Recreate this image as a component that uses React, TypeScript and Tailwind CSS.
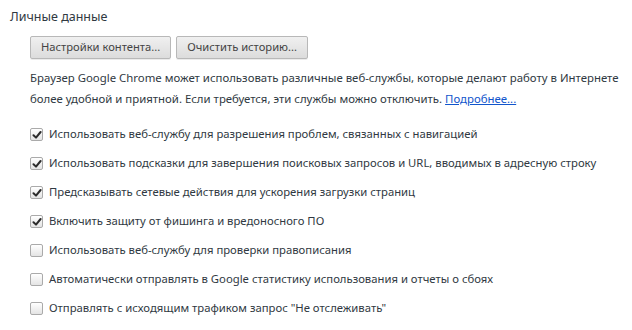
import { useState } from "react";

const options = [
  { label: "Использовать веб-службу для разрешения проблем, связанных с навигацией", checked: true },
  { label: "Использовать подсказки для завершения поисковых запросов и URL, вводимых в адресную строку", checked: true },
  { label: "Предсказывать сетевые действия для ускорения загрузки страниц", checked: true },
  { label: "Включить защиту от фишинга и вредоносного ПО", checked: true },
  { label: "Использовать веб-службу для проверки правописания", checked: false },
  { label: "Автоматически отправлять в Google статистику использования и отчеты о сбоях", checked: false },
  { label: "Отправлять с исходящим трафиком запрос \"Не отслеживать\"", checked: false }
];

function Checkbox({ checked, onChange }: { checked: boolean; onChange: () => void }) {
  return (
    <button
      type="button"
      onClick={onChange}
      className="flex h-[13px] w-[13px] shrink-0 items-center justify-center rounded-[2px] border border-[#aaaaaa] bg-gradient-to-b from-[#ffffff] to-[#e4e4e4]"
    >
      {checked ? (
        <svg className="h-[10px] w-[10px]" viewBox="0 0 10 10" fill="none">
          <path d="M1.5 5.2L4 7.6L8.6 2" stroke="#2b2b2b" strokeWidth="2" strokeLinecap="round" strokeLinejoin="round" />
        </svg>
      ) : null}
    </button>
  );
}

function GrayButton({ children }: { children: string }) {
  return (
    <button
      type="button"
      className="h-[23px] rounded-[2px] border border-[#b8b8b8] bg-gradient-to-b from-[#f0f0f0] to-[#dcdcdc] px-[10px] text-[11.2px] text-[#444444] shadow-[0_1px_0_rgba(0,0,0,0.08)]"
    >
      {children}
    </button>
  );
}

export default function App() {
  const [values, setValues] = useState(options.map((option) => option.checked));

  return (
    <div className="h-[330px] w-[632px] bg-white pl-[10px] pt-[8px] text-[#303942] [font-family:'Noto_Sans',sans-serif]">
      <h3 className="text-[12.5px] leading-[18px]">Личные данные</h3>

      <div className="pl-[20px]">
        <div className="mt-[10px] flex gap-[5px]">
          <GrayButton>Настройки контента...</GrayButton>
          <GrayButton>Очистить историю...</GrayButton>
        </div>

        <p className="mt-[8px] whitespace-nowrap text-[11.4px] leading-[21px]">
          Браузер Google Chrome может использовать различные веб-службы, которые делают работу в Интернете
          <br />
          более удобной и приятной. Если требуется, эти службы можно отключить.{" "}
          <a href="#" className="text-[#1155cc] underline">
            Подробнее...
          </a>
        </p>

        <div className="mt-[11px] flex flex-col">
          {options.map((option, index) => (
            <label key={option.label} className="flex h-[29px] items-center gap-[6px] text-[11.3px]">
              <Checkbox
                checked={values[index]}
                onChange={() =>
                  setValues((current) => current.map((value, i) => (i === index ? !value : value)))
                }
              />
              <span>{option.label}</span>
            </label>
          ))}
        </div>
      </div>
    </div>
  );
}
